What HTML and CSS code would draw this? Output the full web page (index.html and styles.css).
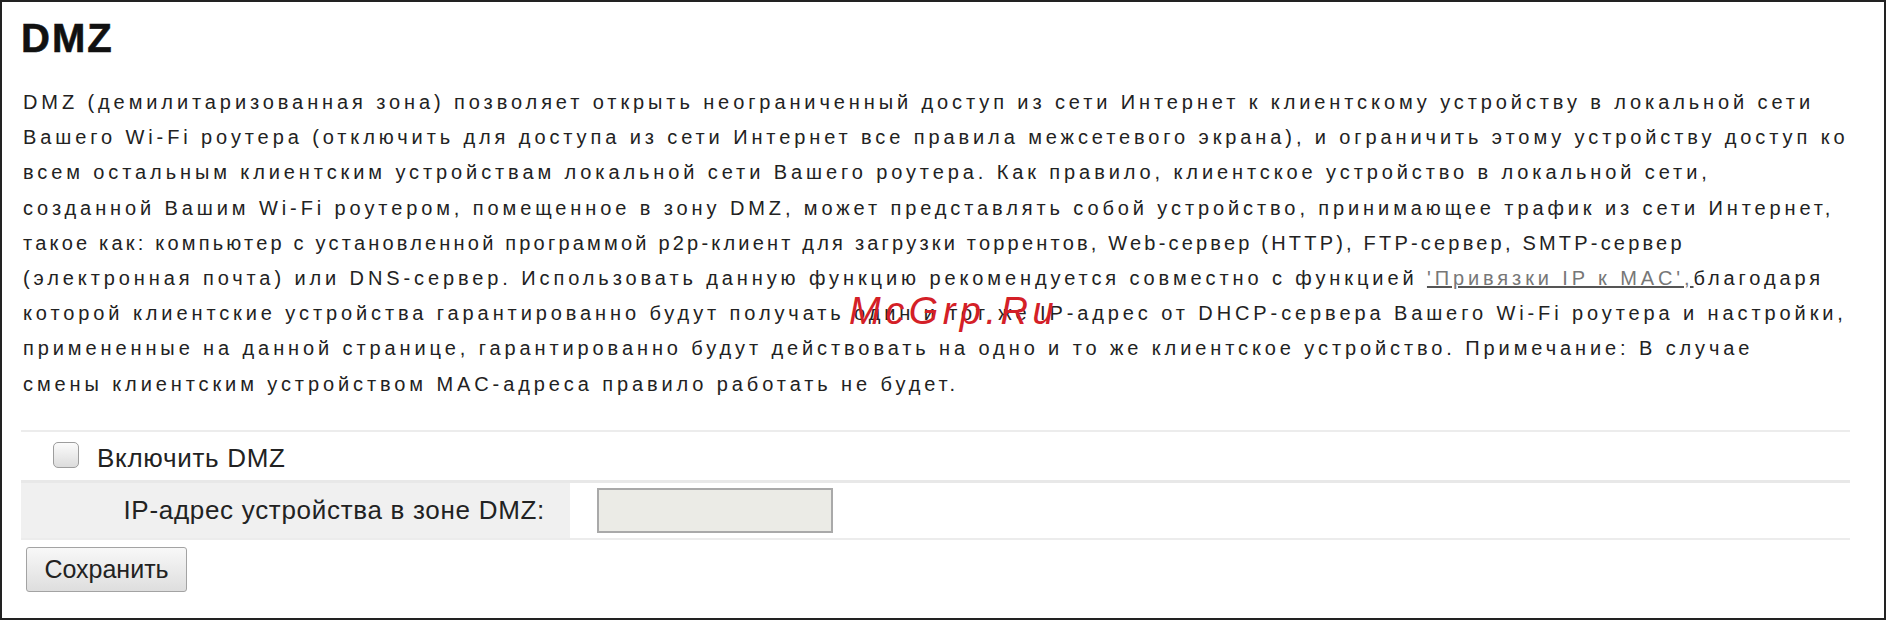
FILE: index.html
```html
<!DOCTYPE html>
<html lang="ru">
<head>
<meta charset="UTF-8" />
<title>DMZ</title>
<link rel="stylesheet" href="styles.css">
</head>
<body>

<div class="frame">
  <h1 class="page-title">DMZ</h1>

  <p class="intro">
    DMZ (демилитаризованная зона) позволяет открыть неограниченный доступ из сети Интернет к клиентскому устройству в локальной сети<br>
    Вашего Wi-Fi роутера (отключить для доступа из сети Интернет все правила межсетевого экрана), и ограничить этому устройству доступ ко<br>
    всем остальным клиентским устройствам локальной сети Вашего роутера. Как правило, клиентское устройство в локальной сети,<br>
    созданной Вашим Wi-Fi роутером, помещенное в зону DMZ, может представлять собой устройство, принимающее трафик из сети Интернет,<br>
    <span class="tight">такое как: компьютер с установленной программой p2p-клиент для загрузки торрентов, Web-сервер (HTTP), FTP-сервер, SMTP-сервер</span><br>
    (электронная почта) или DNS-сервер. Использовать данную функцию рекомендуется совместно с функцией <a href="#" class="link">'Привязки IP к MAC',</a>благодаря<br>
    которой клиентские устройства гарантированно будут получать один и тот же IP-адрес от DHCP-сервера Вашего Wi-Fi роутера и настройки,<br>
    примененные на данной странице, гарантированно будут действовать на одно и то же клиентское устройство. Примечание: В случае<br>
    смены клиентским устройством MAC-адреса правило работать не будет.
  </p>

  <table class="form-table">
    <tr class="row-enable">
      <td colspan="2">
        <label class="check">
          <input type="checkbox" class="check-box">
          <span>Включить DMZ</span>
        </label>
      </td>
    </tr>
    <tr class="row-ip">
      <td class="cell-label">IP-адрес устройства в зоне DMZ:</td>
      <td class="cell-input"><input type="text" class="text-input" disabled></td>
    </tr>
  </table>

  <button class="btn-save">Сохранить</button>

  <!-- водяной знак поверх текста -->
  <div class="watermark">McGrp.Ru</div>
</div>

</body>
</html>
```

FILE: styles.css
```css
/*―― базовое ――*/
html, body      { margin: 0; padding: 0; background: #fff; }
body            { font-family: "Liberation Sans", Arial, sans-serif; color: #222; }

.frame {
  position: relative;
  box-sizing: border-box;
  height: 620px;
  border: 2px solid #222;
  padding: 16px 34px 0 19px;
}

/*―― заголовок и текст ――*/
.page-title {
  margin: 0;
  font-size: 40px; line-height: 40px; font-weight: bold;
  letter-spacing: 2px;
  color: #111;
  -webkit-text-stroke: 0.6px #111;
}
.intro {
  margin: 27px 0 0; padding-left: 2px;
  font-size: 20px; line-height: 35.2px; letter-spacing: 3.9px;
  white-space: nowrap;   /* переносы строк заданы вручную */
  color: #222;
}
.intro .tight   { letter-spacing: 3.2px; }
.link           { color: #777; text-decoration: underline; text-decoration-color: #555; }

/*―― форма ――*/
.form-table     { width: 100%; margin-top: 28px; border-collapse: collapse; border-spacing: 0; font-size: 26px; letter-spacing: 0.7px; }
.form-table td  { padding: 0; }

.row-enable td  { border-top: 2px solid #ececec; height: 48px; }
.check          { display: flex; align-items: center; gap: 18px; padding-left: 32px; }
.check span     { position: relative; top: 3px; }
.check-box {
  appearance: none;
  margin: 0;
  width: 26px; height: 26px;
  border: 1px solid #9d9d9d;
  border-radius: 5px;
  background: linear-gradient(#fbfbfb, #dcdcdc);
  position: relative; top: -1px;
}

.row-ip td      { border-top: 3px solid #e8e8e8; border-bottom: 2px solid #ececec; height: 55px; }
.cell-label     { width: 524px; padding-right: 25px !important; background: #f0f0f0; text-align: right; }
.cell-input     { padding-left: 27px !important; }
.text-input {
  display: block;
  box-sizing: border-box;
  width: 236px; height: 45px;
  margin: 0;
  border: 2px solid #a9a9a9;
  background: #ebebe6;
}

.btn-save {
  display: block;
  margin: 7px 0 0 5px;
  width: 161px; height: 45px;
  border: 1px solid #a3a3a3;
  border-radius: 3px;
  background: linear-gradient(#f8f8f8, #dedede);
  font-family: inherit; font-size: 25px; color: #222;
  padding: 0;
}

/*―― водяной знак ――*/
.watermark {
  position: absolute; left: 847px; top: 290px;
  font-size: 38px; line-height: 1; font-style: italic;
  letter-spacing: 4.5px;
  color: #d42027;
}
```
